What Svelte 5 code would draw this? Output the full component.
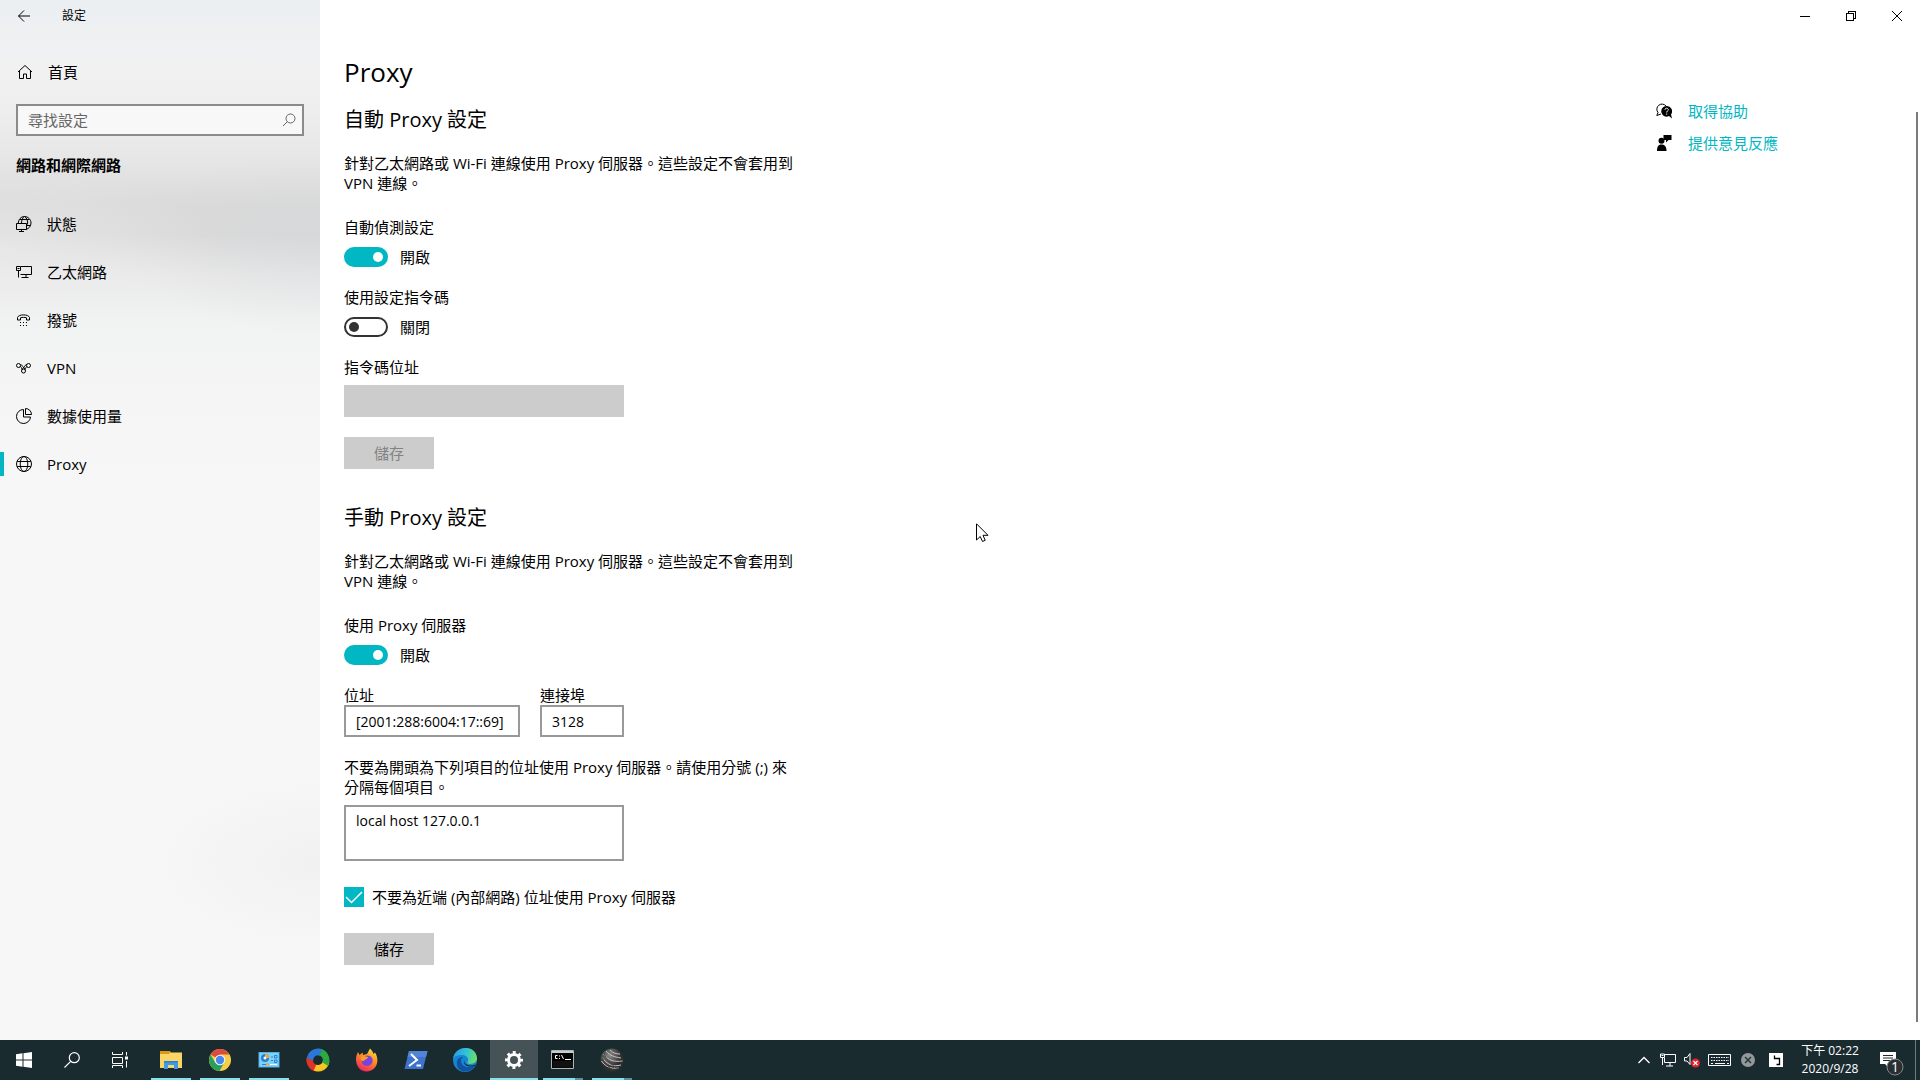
<script>
  let search = $state('');
  let autoDetect = $state(true);
  let useScript = $state(false);
  let scriptAddress = $state('');
  let useProxy = $state(true);
  let address = $state('[2001:288:6004:17::69]');
  let port = $state('3128');
  let exceptions = $state('local host 127.0.0.1');
  let bypassLocal = $state(true);

  const nav = [
    { id: 'status', label: '狀態' },
    { id: 'ethernet', label: '乙太網路' },
    { id: 'dialup', label: '撥號' },
    { id: 'vpn', label: 'VPN' },
    { id: 'usage', label: '數據使用量' },
    { id: 'globe', label: 'Proxy' }
  ];
  const current = 'globe';

  const apps = [
    { id: 'explorer', label: '檔案總管', state: 'open' },
    { id: 'chrome', label: 'Google Chrome', state: 'open' },
    { id: 'panel', label: '控制台', state: 'open' },
    { id: 'swirl', label: '瀏覽器', state: '' },
    { id: 'firefox', label: 'Firefox', state: '' },
    { id: 'powershell', label: 'PowerShell', state: '' },
    { id: 'edge', label: 'Microsoft Edge', state: '' },
    { id: 'gear', label: '設定', state: 'active' },
    { id: 'cmd', label: '命令提示字元', state: 'multi' },
    { id: 'sphere', label: '終端機', state: 'multi' }
  ];
</script>

{#snippet navIcon(id)}
  <svg class="line" width="16" height="16" viewBox="0 0 16 16" aria-hidden="true">
    {#if id === 'status'}
      <path d="M2.300 7.500C2.300 3.500 5 .5 8.500.5s6.500 3 6.500 6.500-2.500 6-5 6.300M5.500 7.500C5.500 4 6.500 1.500 8.500.5c2.500 1.500 3.500 4.500 3 8M3.500 3.500h10M11 9.500h3.500" />
      <path d="M.5 7.500h10v6H.5zM5.500 13.500v2M3 15.500h5" />
    {:else if id === 'ethernet'}
      <path d="M5 2.500h10.500v8H4.500M10 10.500v3M5.500 13.500h7" />
      <path d="M.5 2.500h4v4h-4zM2.500 6.500v7M1.500 4.500h2" />
    {:else if id === 'dialup'}
      <path d="M1.500 5.500C2.500 2 12.500 2 13.500 5.500V8h-3V5.800C8.500 5.200 6.500 5.200 4.500 5.800V8h-3z" />
      <path d="M4 10.500h1M7 10.500h1M10 10.500h1M4 13.500h1M7 13.500h1M10 13.500h1" />
    {:else if id === 'vpn'}
      <circle cx="2.500" cy="5.500" r="2" /><circle cx="12.500" cy="5.500" r="2" /><circle cx="7.500" cy="11" r="2" />
      <path d="M4.500 4.500C6.500 4.500 6.500 8 9.500 9M4.300 6.500C5.500 7 5.500 8 5.800 9.500M10.800 4.300C8 5.500 8.500 8 5.800 9.500M10.800 6.700C9.700 7.300 9.500 8 9.300 9.500" />
    {:else if id === 'usage'}
      <path d="M7.500 1.500A7 7 0 1 0 14.500 9M7.500 1.500V9H14.500" />
      <path d="M9.500.5A6 6 0 0 1 15.500 6.500h-6z" />
    {:else}
      <circle cx="8" cy="8" r="7.500" /><ellipse cx="8" cy="8" rx="3.800" ry="7.500" />
      <path d="M1.300 5.500h13.400M1.300 10.500h13.400" />
    {/if}
  </svg>
{/snippet}

{#snippet appIcon(id)}
  <svg width="24" height="24" viewBox="0 0 24 24" aria-hidden="true">
    {#if id === 'explorer'}
      <path d="M1 3h10l1 2v3H1z" fill="#d99a17" />
      <path d="M1 6h9l1-1.500h12V20H1z" fill="#fbd667" />
      <path d="M5 13h14v8h-4v-4H9v4H5z" fill="#3f9be8" />
      <path d="M5 13h14v1.500H5z" fill="#2b83cf" />
    {:else if id === 'chrome'}
      <circle cx="12" cy="12" r="11" fill="#f7ce46" />
      <path d="M12 12 2.500 6.500A11 11 0 0 1 21.500 6.500H12z" fill="#dc4b3e" />
      <path d="M2.500 6.500A11 11 0 0 0 11.500 23L16.700 14 7.300 14.700z" fill="#2a9f5b" />
      <circle cx="12" cy="12" r="5.300" fill="#f4f4f4" /><circle cx="12" cy="12" r="4.200" fill="#4a86f0" />
    {:else if id === 'panel'}
      <path d="M1.500 4h21v15.500h-21z" fill="#4fb3ea" />
      <path d="M2.500 5h19v13.500h-19z" fill="#7fd2fa" />
      <circle cx="8" cy="10" r="4" fill="#2b7fd3" /><path d="M8 10V6a4 4 0 0 1 4 4z" fill="#f7a823" /><circle cx="8" cy="10" r="1.500" fill="#fff" />
      <path d="M14 9h2M14 12.500h2M17.500 7.500h2.500v2.500h-2.500zM17.500 12h2.500v2.500h-2.500z" fill="none" stroke="#2b7fd3" />
      <path d="M5 16.500h4" stroke="#2b7fd3" /><path d="M9 16.500h3" stroke="#f7a823" stroke-width="2" /><path d="M13 16.500h7" stroke="#fff" />
    {:else if id === 'swirl'}
      <g fill="none" stroke-width="6.500">
        <path d="M12 20.200A8 8 0 0 1 4 10" stroke="#df3428" />
        <path d="M20.200 13A8 8 0 0 1 9 19.600" stroke="#f7c622" />
        <path d="M12 4A8 8 0 0 1 19 16" stroke="#2baa3f" />
        <path d="M4 12A8 8 0 0 1 15 4.500" stroke="#2877d9" />
      </g>
      <path d="M1 9C0 15 3 20 8 22.500 5 18 5 14 7.500 12 4 12 2 11 1 9z" fill="#df3428" />
      <path d="M14 1c2 1 3 3 2.500 6.500C18 9 18.500 11 17 14l5 1C24 8 21 2 14 1z" fill="#2baa3f" />
    {:else if id === 'firefox'}
      <defs><linearGradient id="fox" x1=".8" y1="0" x2=".3" y2="1"><stop offset="0" stop-color="#ffe23e" /><stop offset=".45" stop-color="#ff8a24" /><stop offset="1" stop-color="#ef2365" /></linearGradient></defs>
      <path d="M1 11C1 8 2 6 3 4L4.500 7 7.500 4.500 8 7l4-1 3-5.500C17 3 18 3.500 18.500 6L20 4.500C25 12 22 23 12 23.500 5 23.500 1 18 1 11z" fill="url(#fox)" />
      <path d="M7 11c1-4 8-5 10-1s-1 8-5 8-6-3-5-7z" fill="#7a43d8" />
      <path d="M6 9c3-2 5 0 7 0 0 2-3 2-4 4-3 0-4-2-3-4z" fill="#ff9a26" />
    {:else if id === 'powershell'}
      <path d="M5 3h18.500L19 21H.5z" fill="#3f72cc" />
      <path d="M5 3h18.500L22 9H3.500z" fill="#5285da" />
      <path d="m7 6 6 6-8 6M12.500 17.500H17" fill="none" stroke="#fff" stroke-width="2" />
    {:else if id === 'edge'}
      <defs><linearGradient id="edge-top" x1="0" y1=".4" x2="1" y2=".6"><stop offset="0" stop-color="#2a9ce0" /><stop offset=".5" stop-color="#30c3d8" /><stop offset="1" stop-color="#70df61" /></linearGradient></defs>
      <circle cx="12" cy="12" r="12" fill="#1685d2" />
      <path d="M0 11C2-3 23-4 24 10c0 6-7 7-10 5 3-4 0-8-5-8-4 0-8 1-9 4z" fill="url(#edge-top)" />
      <path d="M8 12c0 6 5 9 14 6-5 8-17 7-18-1-1-5 2-8 6-8-1 1-2 2-2 3z" fill="#11539f" />
      <path d="M11.500 11c-1 2 0 5 3.500 6 3 1 6 .5 8-1l-1 2c-7 2-13-1-10.500-7z" fill="#17282d" />
    {:else if id === 'gear'}
      <g fill="none" stroke="#fff"><circle cx="12" cy="12" r="5.500" stroke-width="3" /><circle cx="12" cy="12" r="7.500" stroke-width="3" stroke-dasharray="2.900 2.990" stroke-dashoffset="1.450" /></g>
    {:else if id === 'cmd'}
      <path d="M.5 2.500h22v18H.5z" fill="#000" stroke="#aeb4b5" /><path d="M1 3h21v2H1z" fill="#c8cccc" />
      <path d="M6.500 7.500H4.500v3h2M8.500 7.500v1M8.500 10v1M10.500 7l2 4M14 11.500h6" fill="none" stroke="#fff" />
      <path d="M2 13h20v6.500H2z" fill="#111" />
    {:else}
      <defs><radialGradient id="ball" cx=".4" cy=".3"><stop offset="0" stop-color="#8c8c8c" /><stop offset="1" stop-color="#2e2e2e" /></radialGradient></defs>
      <circle cx="12" cy="12" r="11.500" fill="url(#ball)" />
      <path d="M6 3c4 5 9 6 15 7M3.500 6c5 7 11 8 19 7M2 9c5 8 11 10 19 8M1.500 13c4 6 10 8 17 7M10 2c3 3 6 4 10 4" fill="none" stroke="#c4c4c4" />
      <path d="M4 5c1 6 8 12 14 16M2 9c2 6 6 10 11 13" fill="none" stroke="#454545" />
    {/if}
  </svg>
{/snippet}

<div class="desktop">
  <div class="window">
    <nav class="sidebar" aria-label="設定">
      <div class="titlebar">
        <button class="back" aria-label="上一頁">
          <svg class="line" width="14" height="14" viewBox="0 0 14 14"><path d="M13 7H1.500M7 1.500 1.500 7 7 12.500" /></svg>
        </button>
        <span>設定</span>
      </div>
      <a class="home" href="#home">
        <svg class="line" width="16" height="16" viewBox="0 0 16 16" aria-hidden="true"><path d="M1 8 8 1.500 15 8M2.500 7v7.500h4V10h3v4.500h4V7" /></svg>
        首頁
      </a>
      <div class="search">
        <input type="search" placeholder="尋找設定" aria-label="尋找設定" bind:value={search} />
        <svg width="14" height="14" viewBox="0 0 14 14" fill="none" stroke="#666" aria-hidden="true"><circle cx="8.500" cy="5.500" r="4.500" /><path d="M5.300 8.700 1 13" /></svg>
      </div>
      <h2 class="category">網路和網際網路</h2>
      <ul>
        {#each nav as item}
          <li><a class:current={item.id === current} href="#{item.id}">{@render navIcon(item.id)}<span>{item.label}</span></a></li>
        {/each}
      </ul>
    </nav>

    <div class="page">
      <div class="controls">
        <button aria-label="最小化"><svg class="line crisp" width="10" height="10" viewBox="0 0 10 10"><path d="M0 5.500h10" /></svg></button>
        <button aria-label="還原"><svg class="line crisp" width="10" height="10" viewBox="0 0 10 10"><path d="M.5 2.500h7v7h-7zM2.500 2.500v-2h7v7h-2" /></svg></button>
        <button aria-label="關閉"><svg class="line" width="10" height="10" viewBox="0 0 10 10"><path d="m0 0 10 10M10 0 0 10" /></svg></button>
      </div>
      <div class="columns">
        <main>
          <h1>Proxy</h1>

          <section>
            <h2>自動 Proxy 設定</h2>
            <p>針對乙太網路或 Wi-Fi 連線使用 Proxy 伺服器。這些設定不會套用到 VPN 連線。</p>
            <div class="field first">
              <label for="detect">自動偵測設定</label>
              <div class="toggle"><input id="detect" type="checkbox" role="switch" bind:checked={autoDetect} /><span>{autoDetect ? '開啟' : '關閉'}</span></div>
            </div>
            <div class="field">
              <label for="use-script">使用設定指令碼</label>
              <div class="toggle"><input id="use-script" type="checkbox" role="switch" bind:checked={useScript} /><span>{useScript ? '開啟' : '關閉'}</span></div>
            </div>
            <div class="field script">
              <label for="script">指令碼位址</label>
              <input id="script" class="text" type="text" disabled={!useScript} bind:value={scriptAddress} />
            </div>
            <button class="save" disabled={!useScript}>儲存</button>
          </section>

          <section class="manual">
            <h2>手動 Proxy 設定</h2>
            <p>針對乙太網路或 Wi-Fi 連線使用 Proxy 伺服器。這些設定不會套用到 VPN 連線。</p>
            <div class="field first">
              <label for="use-proxy">使用 Proxy 伺服器</label>
              <div class="toggle"><input id="use-proxy" type="checkbox" role="switch" bind:checked={useProxy} /><span>{useProxy ? '開啟' : '關閉'}</span></div>
            </div>
            <div class="endpoint">
              <div class="host"><label for="address">位址</label><input id="address" class="text" type="text" bind:value={address} /></div>
              <div class="port"><label for="port">連接埠</label><input id="port" class="text" type="text" bind:value={port} /></div>
            </div>
            <label class="note" for="exceptions">不要為開頭為下列項目的位址使用 Proxy 伺服器。請使用分號 (;) 來分隔每個項目。</label>
            <textarea id="exceptions" class="text" bind:value={exceptions}></textarea>
            <label class="check">
              <span class="box">
                <input type="checkbox" bind:checked={bypassLocal} />
                {#if bypassLocal}<svg width="20" height="20" viewBox="0 0 20 20" aria-hidden="true"><path d="m2 10 5.500 5.500L18 5" fill="none" stroke="#fff" stroke-width="1.500" /></svg>{/if}
              </span>
              不要為近端 (內部網路) 位址使用 Proxy 伺服器
            </label>
            <button class="save">儲存</button>
          </section>
        </main>

        <aside>
          <a href="#help">
            <svg width="16" height="16" viewBox="0 0 16 16" aria-hidden="true">
              <path d="M2 9.500A5 5 0 1 1 10 3M2 9.500.8 12.500 5 11" fill="none" stroke="#000" />
              <path d="M10.500 3a5.300 5.300 0 1 0 2.500 10l3 2.500-1-4A5.300 5.300 0 0 0 10.500 3z" />
              <path d="M9 6.800c0-2.200 3.300-2 3.300 0 0 1.200-1.600 1.200-1.600 2.700M10.700 10.500v1.200" fill="none" stroke="#fff" />
            </svg>
            取得協助
          </a>
          <a href="#feedback">
            <svg width="16" height="16" viewBox="0 0 16 16" aria-hidden="true">
              <path d="M7.500 0h8v5h-3L10 7.500V5H7.500z" /><circle cx="5.500" cy="5.800" r="3" />
              <path d="M1 16c0-4 1-6.500 4.500-6.500S10.500 12 10.500 16z" />
            </svg>
            提供意見反應
          </a>
        </aside>
        <div class="scrollbar"></div>
      </div>
    </div>
  </div>

  <footer class="taskbar">
    <div class="system">
      <button aria-label="開始"><svg width="16" height="16" viewBox="0 0 16 16" fill="#fff"><path d="M0 2.300 6.500 1.300v6.200H0zM7.500 1.200 16 0v7.500H7.500zM0 8.500h6.500v6.300L0 13.800zM7.500 8.500H16V16l-8.500-1.200z" /></svg></button>
      <button aria-label="搜尋"><svg width="16" height="16" viewBox="0 0 16 16" fill="none" stroke="#fff" stroke-width="1.200"><circle cx="10.300" cy="5.700" r="5" /><path d="M6.700 9.300.5 15.500" /></svg></button>
      <button aria-label="工作檢視"><svg width="16" height="16" viewBox="0 0 16 16" fill="none" stroke="#fff"><path d="M.5 0v2.500h10V0M.5 5.500h10v6H.5zM.5 16v-2.500h10V16M14.500 0v3.500M14.500 9v6.500" /><path d="M13 4.500h3v3h-3z" fill="#fff" stroke="none" /></svg></button>
    </div>
    <div class="apps">
      {#each apps as app}
        <button class={app.state} aria-label={app.label}>{@render appIcon(app.id)}</button>
      {/each}
    </div>
    <div class="tray">
      <button aria-label="顯示隱藏的圖示"><svg width="12" height="8" viewBox="0 0 12 8" fill="none" stroke="#fff" stroke-width="1.300"><path d="m.5 7 5.500-5.500L11.500 7" /></svg></button>
      <button aria-label="網路"><svg width="16" height="14" viewBox="0 0 16 14" fill="none" stroke="#fff"><path d="M5 1.500h10.500v8H4.500V5M10 9.500v3.500M6 13h7M.5 1h4v3.500h-4zM2.500 4.500V12M1.500 2.500h2" /></svg></button>
      <button aria-label="音量"><svg width="18" height="16" viewBox="0 0 18 16"><path d="M1.500 5.500H4l3-4v11L4 9H1.500z" fill="none" stroke="#fff" /><circle cx="12.500" cy="11" r="4.500" fill="#e2222e" /><path d="m10.500 9 4 4M14.500 9l-4 4" stroke="#fff" stroke-width="1.200" /></svg></button>
      <button class="keyboard" aria-label="觸控式鍵盤"><svg width="23" height="14" viewBox="0 0 23 14" fill="none" stroke="#fff"><path d="M.5 1.500h22v11H.5z" /><path d="M3 4.500h18M3 7.500h18" stroke-dasharray="1.500 1" /><path d="M3 10.500h2M7 10.500h10M19 10.500h2" /></svg></button>
      <button class="sync" aria-label="輸入法已停用"><svg width="14" height="14" viewBox="0 0 14 14"><circle cx="7" cy="7" r="7" fill="#93999b" /><path d="m4 4 6 6M10 4l-6 6" stroke="#26363a" stroke-width="1.500" /></svg></button>
      <button class="ime" aria-label="注音輸入法"><svg width="14" height="14" viewBox="0 0 14 14"><path d="M0 0h14v14H0z" fill="#fff" /><path d="M5.500 2.500V5.500H10.500V11.500H7.500" fill="none" stroke="#000" stroke-width="1.300" /></svg></button>
      <button class="clock"><span>下午 02:22</span><span>2020/9/28</span></button>
      <button class="action" aria-label="通知">
        <svg width="32" height="32" viewBox="0 0 32 32">
          <path d="M4 8h16v12H13v4L9 20H4z" fill="#fff" /><path d="M7 11.500h10M7 14h10M7 16.500h7" stroke="#1a2c31" />
          <circle cx="19" cy="23" r="8" fill="#2b2f31" stroke="#83898b" />
          <text x="19" y="28" text-anchor="middle" fill="#fff">1</text>
        </svg>
      </button>
      <button class="peek" aria-label="顯示桌面"></button>
    </div>
  </footer>

  <svg class="pointer" width="13" height="20" viewBox="0 0 13 20" aria-hidden="true"><path d="M.5.800v16.200l3.700-3.500 2.300 5 2.700-1.200L7 12.300h5z" fill="#fff" stroke="#000" /></svg>
</div>

<style>
  :global(body) { margin: 0; }
  .desktop {
    --accent: #00b7c3;
    position: relative;
    display: flex;
    flex-direction: column;
    min-height: 100vh;
    background: #fff;
    color: #000;
    font: 15px/20px 'Open Sans', 'Noto Sans CJK TC', sans-serif;
  }
  h1, h2, p, ul { margin: 0; padding: 0; font-weight: 400; }
  button { border: 0; padding: 0; background: none; color: inherit; font: inherit; display: flex; align-items: center; justify-content: center; }
  a { color: inherit; text-decoration: none; }
  input, textarea { box-sizing: border-box; margin: 0; font: inherit; color: inherit; }
  svg { display: block; flex: none; }
  .line { fill: none; stroke: #000; }
  .crisp { shape-rendering: crispEdges; }

  .window { flex: 1; display: flex; }
  .sidebar {
    flex: none;
    width: 320px;
    background:
      radial-gradient(ellipse 180px 90px at 100% 83%, #f1f1f1, transparent),
      radial-gradient(ellipse 220px 80px at 0 250px, #ededed90, transparent),
      radial-gradient(ellipse 200px 90px at 100% 245px, #d3d5d970, transparent),
      linear-gradient(#ebeff2, #f1f1f1 70px, #efeeee 110px, #e6e6e6 160px, #dadada 205px, #dadada 235px, #eaeaea 275px, #f1f2f2 320px, #f5f5f5 400px, #f7f7f7 520px);
  }
  .titlebar { display: flex; align-items: center; height: 32px; font-size: 12px; }
  .back { width: 48px; height: 32px; margin-right: 14px; }
  .home { display: flex; align-items: center; gap: 15px; height: 48px; margin-top: 16px; padding-left: 17px; }
  .search { display: flex; align-items: center; box-sizing: border-box; height: 32px; margin: 8px 16px 0; padding-right: 6px; border: 2px solid #8b8b8b; background: #f8f8f8; }
  .search input { flex: 1; min-width: 0; padding: 0 0 0 10px; border: 0; outline: 0; background: none; appearance: none; }
  .search input::placeholder { color: #666; opacity: 1; }
  .category { margin: 19px 16px 25px; font-size: 15px; line-height: 20px; font-weight: 700; }
  ul { list-style: none; }
  li a { display: flex; align-items: center; gap: 15px; height: 48px; padding-left: 16px; }
  li a.current { padding-left: 0; }
  li a.current::before { content: ''; width: 4px; height: 24px; margin-right: -3px; background: var(--accent); }

  .page { flex: 1; display: flex; flex-direction: column; min-width: 0; }
  .controls { display: flex; justify-content: flex-end; height: 32px; }
  .controls button { width: 46px; }
  .columns { flex: 1; display: flex; }
  main { flex: 1; padding: 20px 24px 72px; }
  h1 { font-size: 26px; line-height: 40px; margin-bottom: 14px; }
  section h2 { font-size: 20px; line-height: 28px; margin-bottom: 19px; }
  p, .note { display: block; max-width: 456px; }
  .field { margin-top: 20px; }
  .field.first { margin-top: 24px; }
  .field label, .endpoint label { display: block; }
  .toggle { display: flex; align-items: center; gap: 12px; margin-top: 10px; height: 20px; }
  .toggle input { appearance: none; display: flex; align-items: center; width: 44px; height: 20px; padding: 0 3px; border: 2px solid #333; border-radius: 10px; }
  .toggle input::before { content: ''; width: 10px; height: 10px; border-radius: 50%; background: #333; }
  .toggle input:checked { justify-content: flex-end; border-color: var(--accent); background: var(--accent); }
  .toggle input:checked::before { background: #fff; }
  .text { display: block; width: 100%; height: 32px; padding: 0 10px; border: 2px solid #999; border-radius: 0; background: #fff; font-size: 14px; outline: 0; }
  .text:disabled { border-color: #ccc; background: #ccc; }
  .script { max-width: 280px; }
  .script .text { margin-top: 8px; }
  .save { width: 90px; height: 32px; margin-top: 20px; background: #ccc; }
  .save:disabled { color: #838383; }
  .manual { margin-top: 35px; }
  .endpoint { display: flex; gap: 20px; max-width: 280px; margin: 20px 0; }
  .host { flex: 1; min-width: 0; }
  .port { width: 84px; }
  textarea.text { max-width: 280px; height: 56px; margin-top: 8px; padding: 4px 10px; line-height: 20px; resize: none; overflow: hidden; }
  .check { display: flex; align-items: center; gap: 8px; margin-top: 26px; }
  .box { display: grid; width: 20px; height: 20px; }
  .box > :global(*) { grid-area: 1 / 1; }
  .box input { appearance: none; width: 20px; height: 20px; border: 2px solid #333; }
  .box input:checked { border-color: var(--accent); background: var(--accent); }
  .check + .save { margin-top: 26px; }

  aside { flex: none; width: 260px; padding-top: 67px; }
  aside a { display: flex; align-items: center; gap: 16px; height: 24px; margin-bottom: 8px; color: var(--accent); }
  .scrollbar { width: 2px; margin: 80px 2px 18px 0; background: #7a7a7a; }

  .taskbar { flex: none; display: flex; height: 40px; background: #1a2b30; color: #fff; }
  .system, .apps, .tray { display: flex; }
  .system button, .apps button { width: 48px; height: 40px; }
  .apps { flex: 1; gap: 1px; margin-left: 3px; }
  .open { background: linear-gradient(#85e1ea, #85e1ea) 4px 38px / 40px 2px no-repeat; }
  .apps .active { background: linear-gradient(#85e1ea, #85e1ea) 0 38px / 48px 2px no-repeat #455357; }
  .multi { background: linear-gradient(90deg, #85e1ea 32px, #56949b 32px) 4px 38px / 40px 2px no-repeat; }
  .tray button { width: 24px; }
  .tray .keyboard { width: 31px; }
  .tray .sync { width: 26px; }
  .tray .ime { width: 30px; }
  .tray .clock { width: 78px; flex-direction: column; font-size: 12px; line-height: 18px; }
  .tray .action { width: 46px; }
  .action text { font-size: 14px; }
  .tray .peek { width: 5px; border-left: 1px solid #6f7b7e; }

  .pointer { position: absolute; left: 976px; top: 523px; pointer-events: none; }
</style>
